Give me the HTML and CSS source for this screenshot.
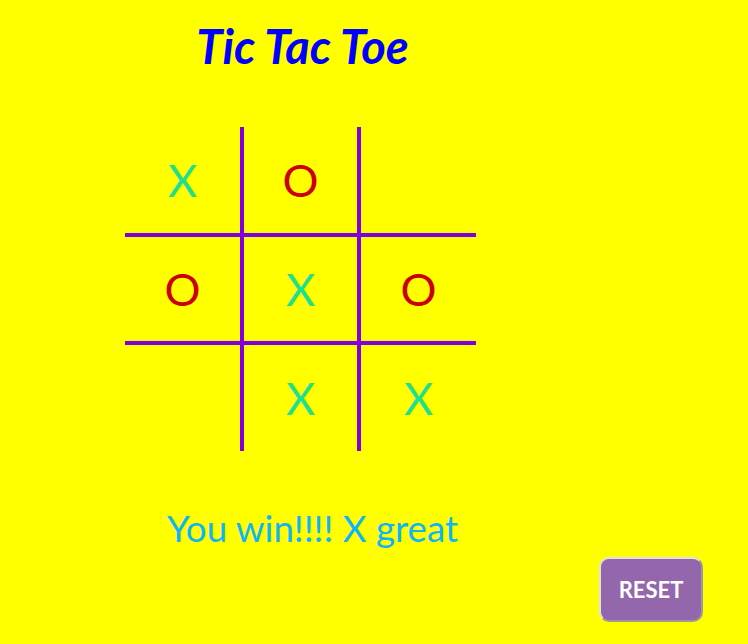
FILE: index.html
```html
<!DOCTYPE html>
<html>
<head>
<meta charset="utf-8">
<title>Tic Tac Toe</title>
<link rel="stylesheet" href="styles.css">
</head>
<body>
<div class="app">
  <h1 class="title">Tic Tac Toe</h1>
  <div class="board">
    <div class="cell c1 r1 x">X</div>
    <div class="cell c2 r1 o">O</div>
    <div class="cell c3 r1"></div>
    <div class="cell c1 r2 o">O</div>
    <div class="cell c2 r2 x">X</div>
    <div class="cell c3 r2 o">O</div>
    <div class="cell c1 r3"></div>
    <div class="cell c2 r3 x">X</div>
    <div class="cell c3 r3 x">X</div>
  </div>
  <p class="message">You win!!!! X great</p>
  <div class="actions">
    <button class="reset">RESET</button>
  </div>
</div>
</body>
</html>
```
FILE: styles.css
```css
html, body {
  margin: 0;
  padding: 0;
  background: #ffff00;
  font-family: Lato, "Open Sans", sans-serif;
}
.app {
  width: 748px;
  height: 644px;
  display: flex;
  flex-direction: column;
}
.title {
  margin: 20px 0 0 127px;
  width: 351px;
  text-align: center;
  font-size: 47px;
  font-weight: 700;
  font-style: italic;
  color: #0000ff;
  line-height: 52px;
}
.board {
  margin: 55px 0 0 125px;
  display: grid;
  grid-template-columns: 119px 117px 115px;
  grid-template-rows: 110px 108px 106px;
  width: 351px;
}
.cell {
  display: flex;
  align-items: center;
  justify-content: center;
  font-size: 45px;
  line-height: 1;
  border-color: #8000e0;
  border-style: solid;
  border-width: 0;
}
.c1, .c2 { border-right-width: 4px; }
.r1, .r2 { border-bottom-width: 4px; }
.x { color: #1ee08e; }
.o { color: #cc0000; }
.message {
  margin: 55px 0 0 167px;
  font-size: 36.7px;
  line-height: 44px;
  color: #10b4f8;
}
.actions {
  display: flex;
  justify-content: flex-end;
  padding-right: 45px;
  margin-top: 7px;
}
.reset {
  width: 104px;
  height: 65px;
  border: 2px solid;
  border-color: #e2e2e2 #9a9a9a #9a9a9a #e2e2e2;
  border-radius: 10px;
  background: #9467ac;
  color: #ffffff;
  font-family: Lato, sans-serif;
  font-weight: 700;
  font-size: 22px;
  padding: 0;
}
```
